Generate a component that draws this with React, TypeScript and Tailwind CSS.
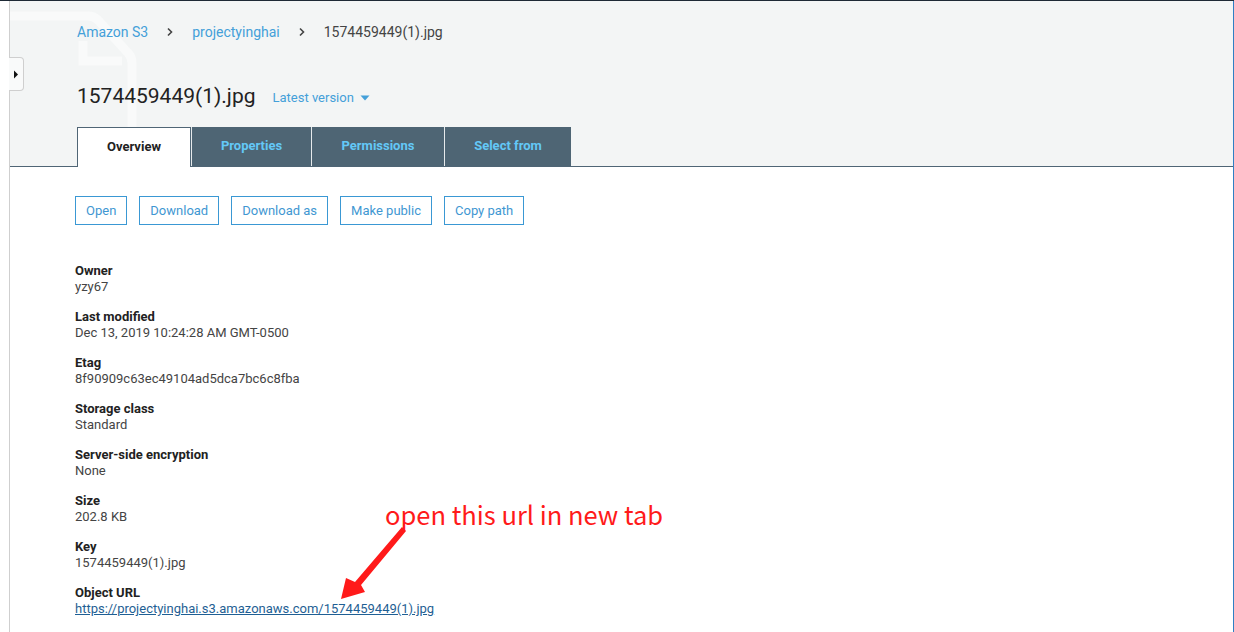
import React from "react";

const font = { fontFamily: "Roboto, 'Liberation Sans', Arial, sans-serif" };

function Chevron() {
  return (
    <svg width="8" height="10" viewBox="0 0 8 10" className="mx-[18px]">
      <path d="M2 1.5 L5.5 5 L2 8.5" fill="none" stroke="#444" strokeWidth="1.6" />
    </svg>
  );
}

const details: [string, string][] = [
  ["Owner", "yzy67"],
  ["Last modified", "Dec 13, 2019 10:24:28 AM GMT-0500"],
  ["Etag", "8f90909c63ec49104ad5dca7bc6c8fba"],
  ["Storage class", "Standard"],
  ["Server-side encryption", "None"],
  ["Size", "202.8 KB"],
  ["Key", "1574459449(1).jpg"],
];

export default function App() {
  return (
    <div
      className="relative w-[1234px] h-[632px] overflow-hidden bg-white flex border-t border-[#1e2935]"
      style={font}
    >
      {/* left strip */}
      <div className="w-[10px] shrink-0 bg-white border-r border-[#cfcfcf]" />
      {/* sidebar toggle */}
      <div className="absolute left-[9px] top-[56px] w-[15px] h-[34px] bg-[#f9fafa] border border-l-0 border-[#cfcfcf] rounded-r-[4px] flex items-center justify-center z-10">
        <svg width="6" height="9" viewBox="0 0 6 9">
          <path d="M1 0.5 L5 4.5 L1 8.5 Z" fill="#111" />
        </svg>
      </div>

      {/* main */}
      <div className="flex-1 flex flex-col border-r border-[#2f7fc4]">
        {/* header */}
        <div className="relative h-[166px] shrink-0 bg-[#f3f5f5] border-b border-[#4f6575] flex flex-col pl-[67px]">
          <svg
            className="absolute left-0 top-0"
            width="140"
            height="165"
            viewBox="0 0 140 165"
          >
            <path
              d="M-10 15 H78 Q84 15 88 19 L118 52 Q122 56 122 62 V170"
              fill="none"
              stroke="#f9fafa"
              strokeWidth="9"
            />
            <path d="M73 40 V60 H112" fill="none" stroke="#f9fafa" strokeWidth="9" />
          </svg>

          <div className="relative flex items-center h-[20px] mt-[21px] text-[14px]">
            <span className="text-[#44a0d9]">Amazon S3</span>
            <Chevron />
            <span className="text-[#44a0d9]">projectyinghai</span>
            <Chevron />
            <span className="text-[#444]">1574459449(1).jpg</span>
          </div>

          <div className="relative flex items-center h-[28px] mt-[41px]">
            <span className="text-[21px] text-[#222]">1574459449(1).jpg</span>
            <span className="ml-[17px] mt-[2px] text-[13px] text-[#44a0d9] flex items-center">
              Latest version
              <svg width="10" height="6" viewBox="0 0 10 6" className="ml-[6px]">
                <path d="M0.5 0.5 H9.5 L5 5.5 Z" fill="#44a0d9" />
              </svg>
            </span>
          </div>

          <div className="relative flex items-start mt-auto -mb-px text-[13px] font-bold">
            <div className="w-[114px] h-[40px] pb-[2px] bg-white border-t border-x border-[#4f6575] flex items-center justify-center text-[#222]">
              Overview
            </div>
            <div className="w-[120px] h-[39px] pb-[1px] bg-[#4e6574] border-l border-[#e6eaec] flex items-center justify-center text-[#63c8f7]">
              Properties
            </div>
            <div className="w-[133px] h-[39px] pb-[1px] bg-[#4e6574] border-l border-[#e6eaec] flex items-center justify-center text-[#63c8f7]">
              Permissions
            </div>
            <div className="w-[127px] h-[39px] pb-[1px] bg-[#4e6574] border-l border-[#e6eaec] flex items-center justify-center text-[#63c8f7]">
              Select from
            </div>
          </div>
        </div>

        {/* content */}
        <div className="pl-[65px] pt-[29px]">
          <div className="flex gap-[12px]">
            {["Open", "Download", "Download as", "Make public", "Copy path"].map((b) => (
              <div
                key={b}
                className="h-[29px] px-[10px] border border-[#3a98d4] text-[13px] text-[#3f97d2] flex items-center"
              >
                {b}
              </div>
            ))}
          </div>

          <div className="mt-[38px] flex flex-col gap-[14px] text-[13px] leading-[16px]">
            {details.map(([k, v]) => (
              <div key={k}>
                <div className="font-bold text-[#222]">{k}</div>
                <div className="text-[#444]">{v}</div>
              </div>
            ))}
            <div>
              <div className="font-bold text-[#222]">Object URL</div>
              <div className="text-[#1f5f94] underline">
                https://projectyinghai.s3.amazonaws.com/1574459449(1).jpg
              </div>
            </div>
          </div>
        </div>
      </div>

      {/* annotation */}
      <div
        className="absolute left-[385px] top-[497px] text-[25.5px] leading-[32px] text-[#ff1a1a] whitespace-nowrap"
        style={{ fontFamily: "'Noto Sans CJK SC', 'Noto Sans', sans-serif" }}
      >
        open this url in new tab
      </div>
      <svg className="absolute left-0 top-0 pointer-events-none" width="1234" height="632">
        <polygon
          points="402,526 406,530 361,584 365,591 341,598 346,577 355,581"
          fill="#ff1a1a"
        />
      </svg>
    </div>
  );
}
